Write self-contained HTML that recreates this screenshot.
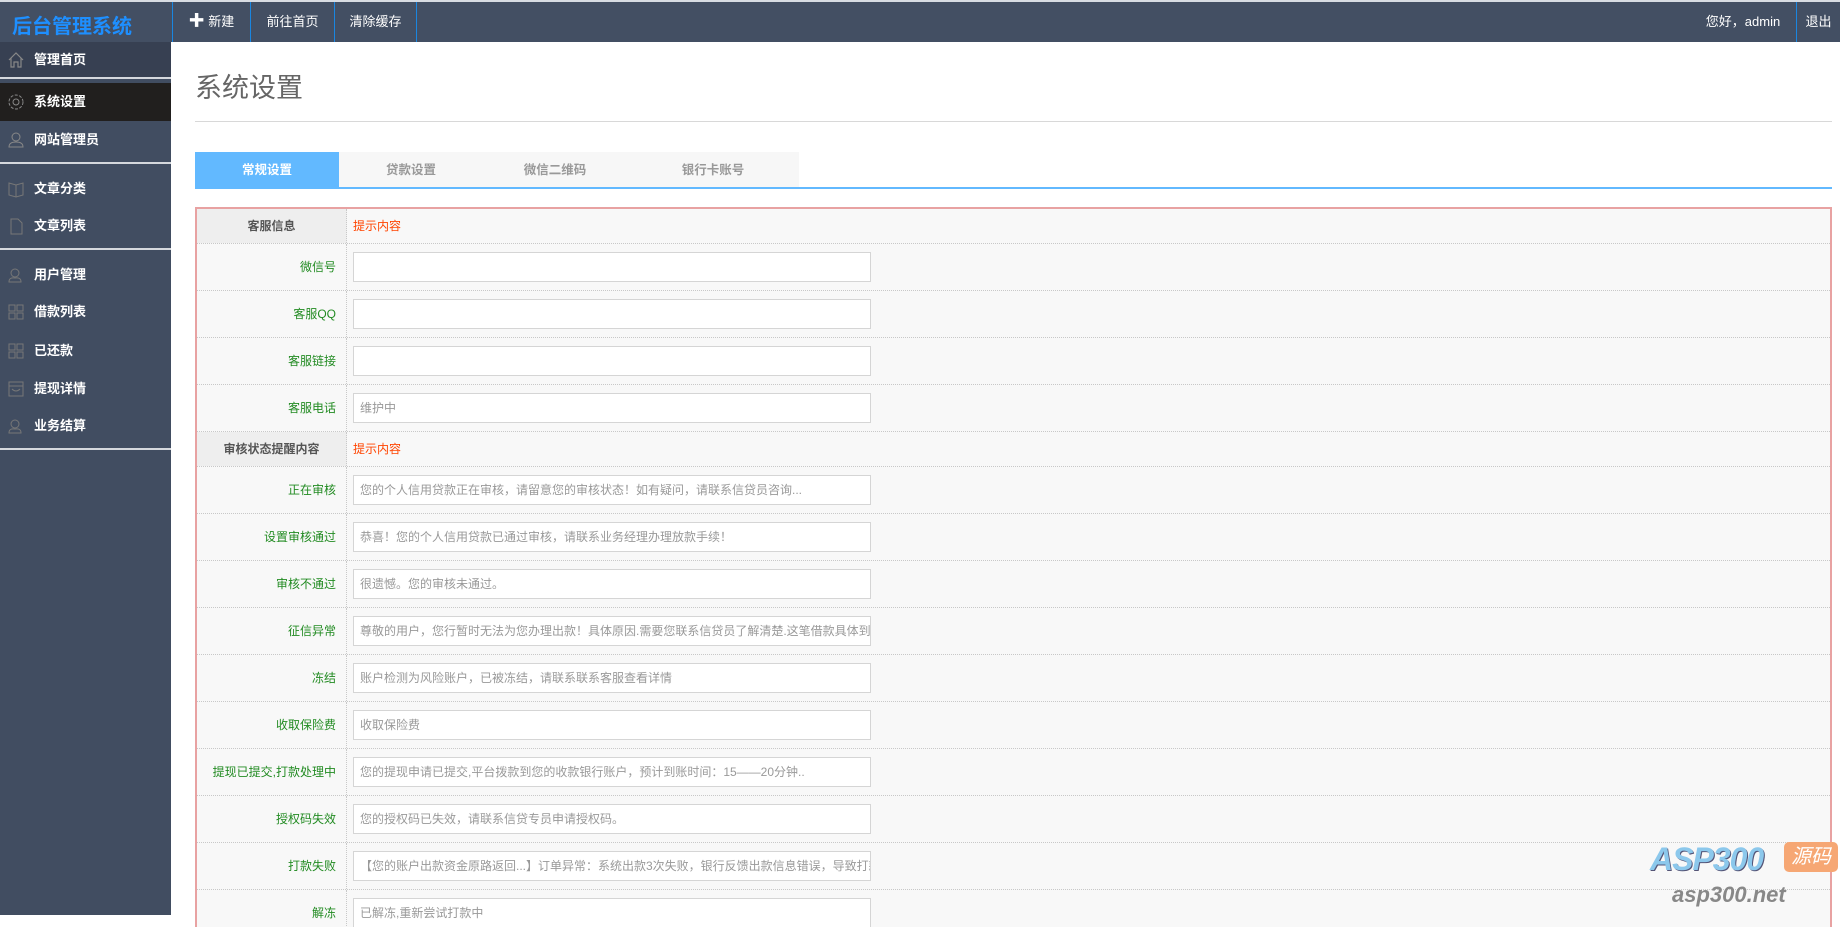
<!DOCTYPE html>
<html><head><meta charset="utf-8">
<style>
*{margin:0;padding:0;box-sizing:border-box}
body{width:1840px;height:915px;overflow:hidden;background:#fff;font-family:"Liberation Sans","Noto Sans CJK SC",sans-serif;position:relative}
.top{position:absolute;left:0;top:0;width:1840px;height:42px;background:#434f63;border-top:2px solid #d8dce2}
.logo{position:absolute;left:12px;top:8px;color:#1e8fff;font-size:20px;font-weight:bold}
.nav{position:absolute;top:0;height:40px;line-height:40px;color:#fff;font-size:13px;border-left:1px solid #1a86e0;text-align:center}
.side{position:absolute;left:0;top:42px;width:171px;height:873px;background:#414d61}
.it{position:absolute;left:0;width:171px;color:#fff;font-weight:bold;font-size:13px}
.it span{position:absolute;left:34px}
.it svg{position:absolute;left:6px}
.sep{position:absolute;left:0;width:171px;height:2px;background:#d5d8dd}
.title{position:absolute;left:195px;top:66px;font-size:27px;color:#666}
.hr{position:absolute;left:195px;top:121px;width:1637px;height:1px;background:#d8d8d8}
.tabs{position:absolute;left:195px;top:152px;height:36px;width:604px;background:#f7f7f7}
.tab{position:absolute;top:0;width:144px;height:36px;line-height:36px;text-align:center;font-size:12.5px;color:#999;font-weight:bold}
.tl{position:absolute;left:195px;top:187px;width:1637px;height:2px;background:#62b9ff}
.tbl{position:absolute;left:195px;top:207px;width:1637px;height:720px;border:2px solid #e8a2a2;border-bottom:none;background:#f8f8f8;overflow:hidden}
.row{position:absolute;left:0;width:1633px;border-bottom:1px dotted #c8c8c8}
.lab{position:absolute;left:0;top:0;width:150px;height:100%;border-right:1px dotted #c8c8c8;text-align:right;padding-right:10px;color:#228b22;font-size:12px;white-space:nowrap}
.hd .lab{background:#eee;color:#555;text-align:center;padding-right:0;font-weight:bold;font-size:12px}
.tip{position:absolute;left:156px;color:#ff4400;font-size:12px}
.inp{position:absolute;left:156px;top:8px;width:518px;height:30px;background:#fff;border:1px solid #d5d5d5;color:#999;font-size:12px;line-height:28px;padding-left:6px;white-space:nowrap;overflow:hidden}
.wm{position:absolute;left:1650px;top:841px;font-style:italic;font-weight:bold;font-size:32px;color:#8cc8ec;letter-spacing:-1px;text-shadow:1px 1px 0 #557}
.wm2{position:absolute;left:1784px;top:842px;width:54px;height:30px;background:#f6a774;border-radius:5px;color:#fff;font-size:20px;font-style:italic;line-height:30px;text-align:center}
.wm3{position:absolute;left:1672px;top:882px;font-style:italic;font-weight:bold;font-size:22px;color:#888}
</style></head><body>
<div class="top">
<div class="logo">后台管理系统</div>
<div class="nav" style="left:172px;width:78px"><b style="font-size:16px">✚</b> 新建</div>
<div class="nav" style="left:250px;width:84px">前往首页</div>
<div class="nav" style="left:334px;width:83px;border-right:1px solid #1a86e0">清除缓存</div>
<div class="nav" style="left:1690px;width:106px;border-left:none">您好，admin</div>
<div class="nav" style="left:1796px;width:44px">退出</div>
</div>
<div class="side">
<div class="it" style="top:0;height:35px;background:#374052;line-height:35px"><svg width="20" height="20" viewBox="0 0 20 20" style="top:8px"><path d="M3 10 L10 3 L17 10 M5 8 V17 H8 V12 H12 V17 H15 V8" fill="none" stroke="#888" stroke-width="1.2"/></svg><span>管理首页</span></div>
<div class="sep" style="top:35px"></div>
<div class="it" style="top:41px;height:38px;background:#211f1e;line-height:38px"><svg width="20" height="20" viewBox="0 0 20 20" style="top:9px"><circle cx="10" cy="10" r="3" fill="none" stroke="#888"/><circle cx="10" cy="10" r="7" fill="none" stroke="#888" stroke-dasharray="3 1.5"/></svg><span>系统设置</span></div>
<div class="it" style="top:79px;height:38px;line-height:38px"><svg width="20" height="20" viewBox="0 0 20 20" style="top:9px"><circle cx="10" cy="7" r="4" fill="none" stroke="#888"/><path d="M3 17 Q3 12 10 12 Q17 12 17 17 Z" fill="none" stroke="#888"/></svg><span>网站管理员</span></div>
<div class="sep" style="top:120px"></div>
<div class="it" style="top:129px;height:36px;line-height:36px"><svg width="20" height="20" viewBox="0 0 20 20" style="top:8px"><path d="M3 4 L10 6 L17 4 V16 L10 18 L3 16 Z M10 6 V18" fill="none" stroke="#777"/></svg><span>文章分类</span></div>
<div class="it" style="top:166px;height:36px;line-height:36px"><svg width="20" height="20" viewBox="0 0 20 20" style="top:8px"><path d="M5 3 H12 L16 7 V18 H5 Z" fill="none" stroke="#777"/></svg><span>文章列表</span></div>
<div class="sep" style="top:206px"></div>
<div class="it" style="top:215px;height:36px;line-height:36px"><svg width="20" height="20" viewBox="0 0 20 20" style="top:8px"><circle cx="9" cy="8" r="4" fill="none" stroke="#777"/><path d="M3 17 Q3 12 9 13 Q15 12 15 17 Z" fill="none" stroke="#777"/></svg><span>用户管理</span></div>
<div class="it" style="top:252px;height:36px;line-height:36px"><svg width="20" height="20" viewBox="0 0 20 20" style="top:8px"><rect x="3" y="3" width="6" height="6" fill="none" stroke="#777"/><rect x="11" y="3" width="6" height="6" fill="none" stroke="#777"/><rect x="3" y="11" width="6" height="6" fill="none" stroke="#777"/><rect x="11" y="11" width="6" height="6" fill="none" stroke="#777"/></svg><span>借款列表</span></div>
<div class="it" style="top:291px;height:36px;line-height:36px"><svg width="20" height="20" viewBox="0 0 20 20" style="top:8px"><rect x="3" y="3" width="6" height="6" fill="none" stroke="#777"/><rect x="11" y="3" width="6" height="6" fill="none" stroke="#777"/><rect x="3" y="11" width="6" height="6" fill="none" stroke="#777"/><rect x="11" y="11" width="6" height="6" fill="none" stroke="#777"/></svg><span>已还款</span></div>
<div class="it" style="top:329px;height:36px;line-height:36px"><svg width="20" height="20" viewBox="0 0 20 20" style="top:8px"><rect x="3" y="3" width="14" height="14" fill="none" stroke="#777"/><path d="M3 7 H17 M6 10 Q10 14 14 10" fill="none" stroke="#777"/></svg><span>提现详情</span></div>
<div class="it" style="top:366px;height:36px;line-height:36px"><svg width="20" height="20" viewBox="0 0 20 20" style="top:8px"><circle cx="9" cy="8" r="4" fill="none" stroke="#777"/><path d="M3 17 Q3 12 9 13 Q15 12 15 17 Z" fill="none" stroke="#777"/></svg><span>业务结算</span></div>
<div class="sep" style="top:406px"></div>
</div>
<div class="title">系统设置</div>
<div class="hr"></div>
<div class="tabs">
<div class="tab" style="left:0;background:#62b9ff;color:#fff">常规设置</div>
<div class="tab" style="left:144px">贷款设置</div>
<div class="tab" style="left:288px">微信二维码</div>
<div class="tab" style="left:432px;width:172px">银行卡账号</div>
</div>
<div class="tl"></div>
<div class="tbl">
<div class="row hd" style="top:0;height:35px;line-height:34px"><div class="lab">客服信息</div><div class="tip">提示内容</div></div>
<div class="row" style="top:35px;height:47px;line-height:46px"><div class="lab">微信号</div><div class="inp"></div></div>
<div class="row" style="top:82px;height:47px;line-height:46px"><div class="lab">客服QQ</div><div class="inp"></div></div>
<div class="row" style="top:129px;height:47px;line-height:46px"><div class="lab">客服链接</div><div class="inp"></div></div>
<div class="row" style="top:176px;height:47px;line-height:46px"><div class="lab">客服电话</div><div class="inp">维护中</div></div>
<div class="row hd" style="top:223px;height:35px;line-height:34px"><div class="lab">审核状态提醒内容</div><div class="tip">提示内容</div></div>
<div class="row" style="top:258px;height:47px;line-height:46px"><div class="lab">正在审核</div><div class="inp">您的个人信用贷款正在审核，请留意您的审核状态！如有疑问，请联系信贷员咨询...</div></div>
<div class="row" style="top:305px;height:47px;line-height:46px"><div class="lab">设置审核通过</div><div class="inp">恭喜！您的个人信用贷款已通过审核，请联系业务经理办理放款手续！</div></div>
<div class="row" style="top:352px;height:47px;line-height:46px"><div class="lab">审核不通过</div><div class="inp">很遗憾。您的审核未通过。</div></div>
<div class="row" style="top:399px;height:47px;line-height:46px"><div class="lab">征信异常</div><div class="inp">尊敬的用户，您行暂时无法为您办理出款！具体原因.需要您联系信贷员了解清楚.这笔借款具体到</div></div>
<div class="row" style="top:446px;height:47px;line-height:46px"><div class="lab">冻结</div><div class="inp">账户检测为风险账户，已被冻结，请联系联系客服查看详情</div></div>
<div class="row" style="top:493px;height:47px;line-height:46px"><div class="lab">收取保险费</div><div class="inp">收取保险费</div></div>
<div class="row" style="top:540px;height:47px;line-height:46px"><div class="lab">提现已提交,打款处理中</div><div class="inp">您的提现申请已提交,平台拨款到您的收款银行账户，预计到账时间：15——20分钟..</div></div>
<div class="row" style="top:587px;height:47px;line-height:46px"><div class="lab">授权码失效</div><div class="inp">您的授权码已失效，请联系信贷专员申请授权码。</div></div>
<div class="row" style="top:634px;height:47px;line-height:46px"><div class="lab">打款失败</div><div class="inp">【您的账户出款资金原路返回...】订单异常：系统出款3次失败，银行反馈出款信息错误，导致打款失败</div></div>
<div class="row" style="top:681px;height:47px;line-height:46px"><div class="lab">解冻</div><div class="inp">已解冻,重新尝试打款中</div></div>
</div>
<div class="wm">ASP300</div>
<div class="wm2">源码</div>
<div class="wm3">asp300.net</div>
</body></html>
